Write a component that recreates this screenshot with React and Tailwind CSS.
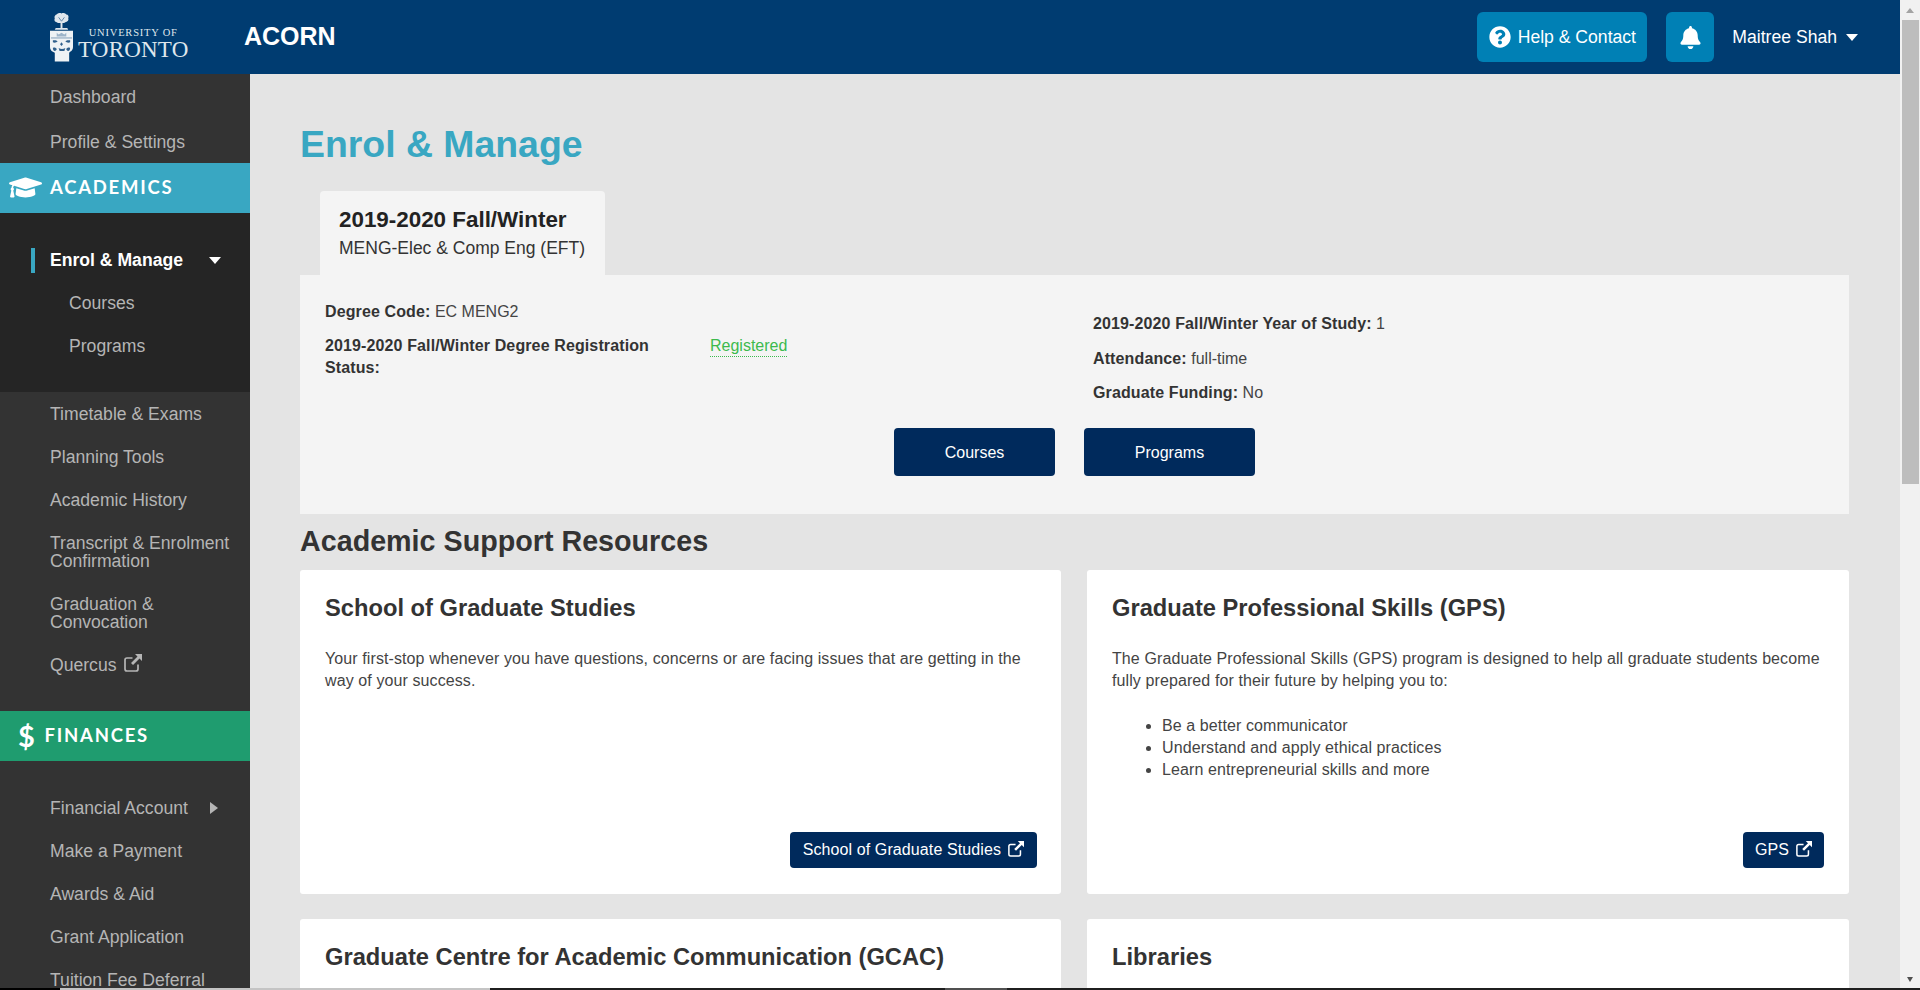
import { FaBell, FaGraduationCap, FaQuestionCircle } from "react-icons/fa";

const Crest = () => (
  <svg width="23" height="50" viewBox="0 0 24 51" className="shrink-0">
    {/* tree */}
    <path
      d="M12 1c2-1 4 0 5 1 2 0 3 2 2 4 1 2-1 4-3 4-1 1-2 1-3 1v5h-2v-5c-2 0-3 0-4-1-2 0-3-2-2-4-1-2 1-4 2-4 1-1 3-2 5-1z"
      fill="#dfe6ec"
    />
    <path d="M9 5l3 4 3-4" stroke="#5f84a6" strokeWidth="1" fill="none" />
    <path d="M6 16h12l1 2H5z" fill="#dfe6ec" />
    {/* shield */}
    <path d="M0 19h24v17c0 2-1 4-3 5l-1 1v9H5v-9l-2-1c-2-1-3-3-3-5z" fill="#eef2f5" />
    <path d="M1 26.500h22" stroke="#5f84a6" strokeWidth="0.8" />
    <path d="M7 21l2 2 3-2 3 2 2-2v4H7z" fill="#9db4c9" />
    <path d="M3 29c2 0 4 0 5 1-1 1-3 2-5 1zM21 29c-2 0-4 0-5 1 1 1 3 2 5 1z" fill="#2f5f8c" />
    <path d="M12 31l1.500 2-1.500 2-1.500-2z" fill="#2f5f8c" />
    <path d="M3 37c2-1 3 0 4 1 0 1-1 2-2 2-1 0-2-1-2-3zM21 37c-2-1-3 0-4 1 0 1 1 2 2 2 1 0 2-1 2-3z" fill="#2f5f8c" />
    <path d="M9 37c2 1.500 5 1.500 7 0l-1 3H10z" fill="#2f5f8c" />
  </svg>
);

// same shape as the old font-awesome external-link glyph
const ExternalLink = ({ size = 18, className = "" }) => (
  <svg width={size} height={size} viewBox="0 0 18 18" className={className}>
    <path
      d="M14 10.500V15a2 2 0 0 1-2 2H3a2 2 0 0 1-2-2V6a2 2 0 0 1 2-2h5.500"
      fill="none"
      stroke="currentColor"
      strokeWidth="1.700"
    />
    <path d="M11 0h7v7l-2.500-2.500L9 11 7 9l6.500-6.500z" fill="currentColor" />
  </svg>
);

const NavItem = ({ children, h = "h-[43px]", pad = "pl-[50px]" }) => (
  <a className={`flex items-center ${h} ${pad} text-[17.6px] leading-[18px] text-[#b5b5b5]`}>{children}</a>
);

const SectionBand = ({ color, icon, label }) => (
  <div className={`flex h-[50px] items-center pb-[1px] ${color} font-['Lato',sans-serif] text-[18.5px] font-bold tracking-[1.75px] text-white`}>
    {icon}
    {label}
  </div>
);

const NavLink = ({ children, className = "px-[12px]" }) => (
  <button className={`flex h-[36px] items-center gap-[7px] rounded-[4px] bg-[#002a5c] text-[16px] tracking-[0.1px] text-white ${className}`}>
    {children}
    <ExternalLink size={16} className="mb-[2px]" />
  </button>
);

const Field = ({ label, value, className = "" }) => (
  <p className={className}>
    <span className="font-bold tracking-[0.12px] text-[#333]">{label}</span> {value}
  </p>
);

const Card = ({ title, children, action }) => (
  <section className="flex h-[324px] flex-col rounded-[3px] bg-white px-[25px] pt-[24px] pb-[26px]">
    <h3 className="text-[23.7px] leading-[28px] font-bold text-[#333]">{title}</h3>
    <div className="mt-[26px] flex-1 text-[16px] leading-[22px] tracking-[0.1px] text-[#444]">{children}</div>
    <div className="flex justify-end">{action}</div>
  </section>
);

export default function App() {
  return (
    <div className="flex h-screen flex-col overflow-hidden bg-[#e4e4e4] font-['Liberation_Sans',Arial,sans-serif]">
      <div className="flex min-h-0 flex-1">
        <div className="flex min-w-0 flex-1 flex-col">
          <header className="flex h-[74px] shrink-0 items-center bg-[#003c71] text-white">
            <div className="ml-[50px] flex w-[194px] items-center">
              <Crest />
              <div className="mt-[14px] ml-[5px] flex flex-col items-center font-['Liberation_Serif',serif] text-[#dfe6ec]">
                <span className="text-[10.5px] leading-[12px] tracking-[0.8px]">UNIVERSITY OF</span>
                <span className="text-[23px] leading-[22px] tracking-[0.2px]">TORONTO</span>
              </div>
            </div>
            <span className="text-[25px] font-bold">ACORN</span>
            <div className="ml-auto flex items-center">
              <button className="flex h-[50px] w-[170px] items-center justify-center gap-[7px] rounded-[6px] bg-[#0080b5] text-[17.6px]">
                <FaQuestionCircle size={22} />
                Help &amp; Contact
              </button>
              <button className="ml-[19px] flex h-[50px] w-[48px] items-center justify-center rounded-[6px] bg-[#0080b5]">
                <FaBell size={23} />
              </button>
              <span className="ml-[18px] text-[17.6px]">Maitree Shah</span>
              <span className="mr-[42px] ml-[9px] h-0 w-0 border-x-[6.5px] border-t-[7px] border-x-transparent border-t-white" />
            </div>
          </header>

          <div className="flex min-h-0 flex-1">
            <aside className="w-[250px] shrink-0 overflow-hidden bg-[#333]">
              <NavItem h="h-[45px]">Dashboard</NavItem>
              <NavItem h="h-[44px] pt-[2px]">Profile &amp; Settings</NavItem>
              <SectionBand
                color="bg-[#39a7c2]"
                icon={<FaGraduationCap size={33} className="mr-[8px] ml-[9px]" />}
                label="ACADEMICS"
              />
              <div className="h-[179px] bg-[#252525] pt-[26px]">
                <div className="flex h-[42px] items-center">
                  <span className="ml-[31px] h-[25px] w-[4px] bg-[#39a7c2]" />
                  <span className="ml-[15px] text-[17.6px] font-bold text-white">Enrol &amp; Manage</span>
                  <span className="ml-[26px] h-0 w-0 border-x-[6.5px] border-t-[7px] border-x-transparent border-t-white" />
                </div>
                <NavItem pad="pl-[69px]">Courses</NavItem>
                <NavItem pad="pl-[69px]">Programs</NavItem>
              </div>
              <NavItem>Timetable &amp; Exams</NavItem>
              <NavItem>Planning Tools</NavItem>
              <NavItem>Academic History</NavItem>
              <NavItem h="h-[61px]">
                Transcript &amp; Enrolment
                <br />
                Confirmation
              </NavItem>
              <NavItem h="h-[61px]">
                Graduation &amp;
                <br />
                Convocation
              </NavItem>
              <NavItem>
                Quercus
                <ExternalLink size={18} className="mb-[3px] ml-[7px]" />
              </NavItem>
              <div className="h-[25px]" />
              <SectionBand
                color="bg-[#1f9c6f]"
                icon={<span className="mr-[8px] ml-[18px] text-[29px] leading-none">$</span>}
                label="FINANCES"
              />
              <div className="h-[25px]" />
              <NavItem>
                Financial Account
                <span className="ml-[22px] h-0 w-0 border-y-[6.5px] border-l-[8px] border-y-transparent border-l-[#b5b5b5]" />
              </NavItem>
              <NavItem>Make a Payment</NavItem>
              <NavItem>Awards &amp; Aid</NavItem>
              <NavItem>Grant Application</NavItem>
              <NavItem>Tuition Fee Deferral</NavItem>
            </aside>

            <main className="min-w-0 flex-1 overflow-hidden pr-[51px] pl-[50px]">
              <h1 className="mt-[48px] text-[37.4px] leading-[44px] font-bold text-[#39a7c2]">Enrol &amp; Manage</h1>
              <div className="mt-[25px] ml-[20px] h-[84px] w-[285px] rounded-t-[4px] bg-[#f4f4f4] pt-[16px] pl-[19px]">
                <div className="text-[22.4px] leading-[26px] font-bold text-[#222]">2019-2020 Fall/Winter</div>
                <div className="mt-[3px] text-[17.5px] leading-[24px] text-[#333]">MENG-Elec &amp; Comp Eng (EFT)</div>
              </div>
              <div className="h-[239px] bg-[#f4f4f4] px-[25px] pt-[26px] text-[16px] text-[#444]">
                <div className="flex h-[127px]">
                  <div className="w-[768px]">
                    <Field label="Degree Code:" value="EC MENG2" className="leading-[22px]" />
                    <div className="mt-[12px] flex leading-[22px]">
                      <span className="w-[385px] font-bold tracking-[0.12px] text-[#333]">
                        2019-2020 Fall/Winter Degree Registration
                        <br />
                        Status:
                      </span>
                      <a className="h-[22px] border-b border-dotted border-[#3cba4d] text-[#3cba4d]">Registered</a>
                    </div>
                  </div>
                  <div className="pt-[12px] leading-[22px]">
                    <Field label="2019-2020 Fall/Winter Year of Study:" value="1" />
                    <Field label="Attendance:" value="full-time" className="mt-[13px]" />
                    <Field label="Graduate Funding:" value="No" className="mt-[12px]" />
                  </div>
                </div>
                <div className="ml-[569px] flex gap-[29px]">
                  <button className="h-[48px] w-[161px] rounded-[4px] bg-[#002a5c] pt-[1px] text-white">Courses</button>
                  <button className="h-[48px] w-[171px] rounded-[4px] bg-[#002a5c] pt-[1px] text-white">Programs</button>
                </div>
              </div>
              <h2 className="mt-[10px] text-[28.7px] leading-[34px] font-bold text-[#333]">Academic Support Resources</h2>
              <div className="mt-[12px] grid grid-cols-[761px_1fr] gap-x-[26px] gap-y-[25px]">
                <Card
                  title="School of Graduate Studies"
                  action={<NavLink className="-mr-[1px] px-[13px]">School of Graduate Studies</NavLink>}
                >
                  Your first-stop whenever you have questions, concerns or are facing issues that are getting in the way of
                  your success.
                </Card>
                <Card title="Graduate Professional Skills (GPS)" action={<NavLink>GPS</NavLink>}>
                  <p>
                    The Graduate Professional Skills (GPS) program is designed to help all graduate students become fully
                    prepared for their future by helping you to:
                  </p>
                  <ul className="mt-[23px] ml-[50px] list-disc">
                    <li>Be a better communicator</li>
                    <li>Understand and apply ethical practices</li>
                    <li>Learn entrepreneurial skills and more</li>
                  </ul>
                </Card>
                <Card title="Graduate Centre for Academic Communication (GCAC)" />
                <Card title="Libraries" />
              </div>
            </main>
          </div>
        </div>

        <div className="flex w-[20px] shrink-0 flex-col items-center bg-[#f1f1f1]">
          <span className="mt-[8px] h-0 w-0 border-x-[4.5px] border-b-[5px] border-x-transparent border-b-[#a3a3a3]" />
          <span className="mt-[7px] ml-[1px] h-[464px] w-[17px] bg-[#bdbdbd]" />
          <span className="mt-auto mb-[6px] h-0 w-0 border-x-[3px] border-t-[5px] border-x-transparent border-t-[#505050]" />
        </div>
      </div>

      <div className="flex h-[2px] shrink-0 bg-[#1f1f1f]">
        <span className="w-[60px] bg-black" />
        <span className="w-[430px] bg-[#c4c4c4]" />
        <span className="ml-[455px] w-[62px] bg-[#505050]" />
      </div>
    </div>
  );
}
